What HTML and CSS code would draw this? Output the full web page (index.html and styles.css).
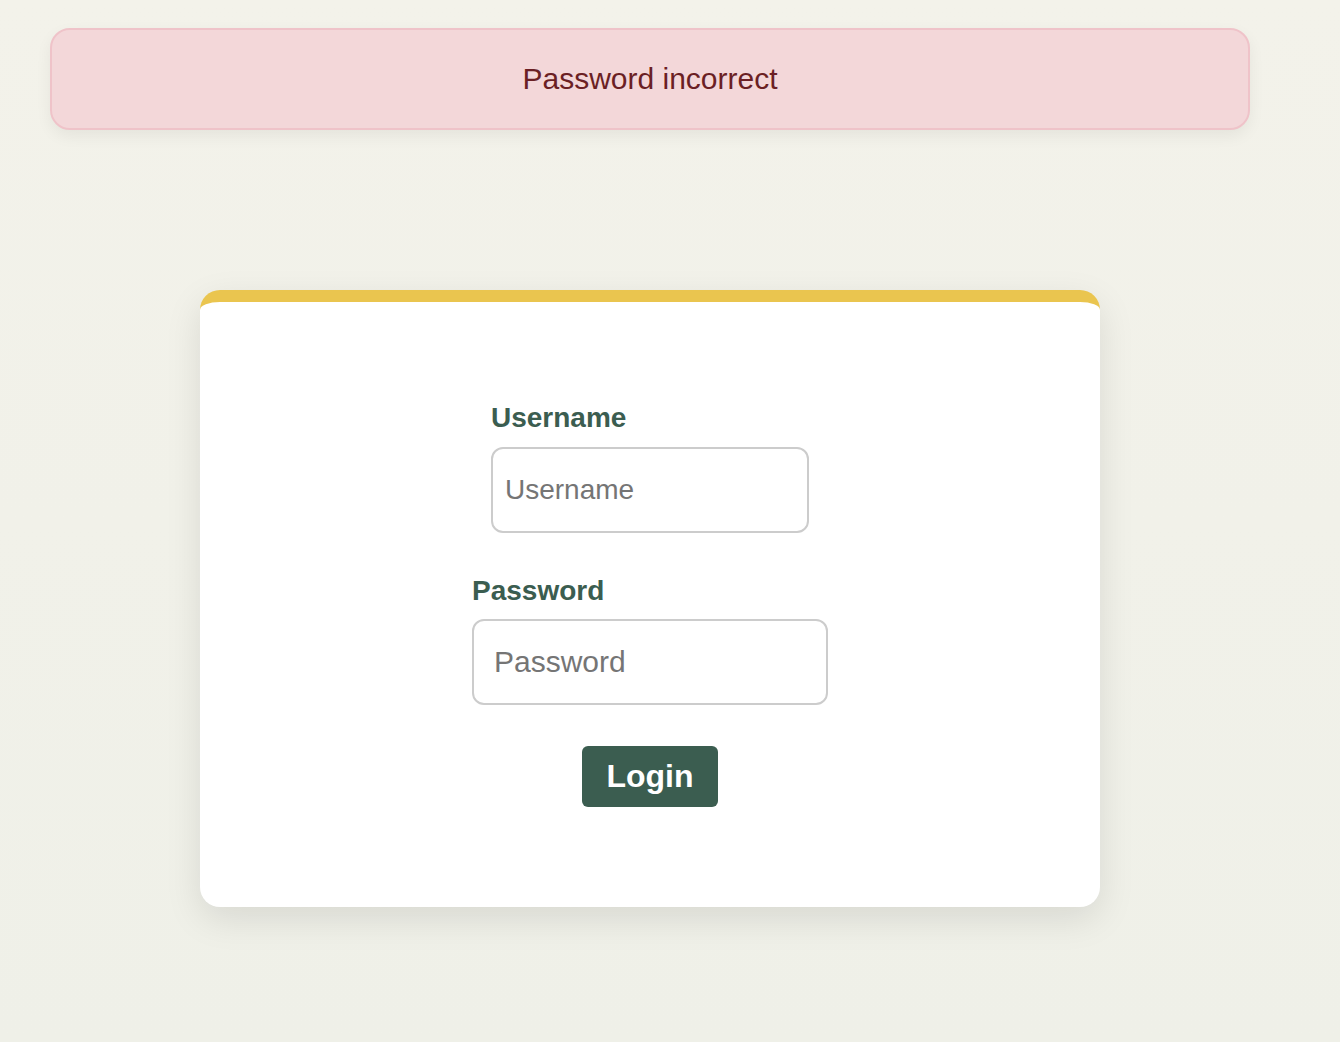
FILE: index.html
```html
<!DOCTYPE html>
<html lang="en">
<head>
<meta charset="utf-8">
<title>Login</title>
<link rel="stylesheet" href="styles.css">
</head>
<body>
<div class="page">
  <div class="alert">Password incorrect</div>
  <form class="card">
    <div class="field field-user">
      <label class="label" for="u">Username</label>
      <input class="input input-user" id="u" type="text" placeholder="Username">
    </div>
    <div class="field field-pass">
      <label class="label" for="p">Password</label>
      <input class="input input-pass" id="p" type="password" placeholder="Password">
    </div>
    <button class="btn" type="button">Login</button>
  </form>
</div>
</body>
</html>
```
FILE: styles.css
```css
html, body {
  margin: 0;
  padding: 0;
}
body {
  min-height: 1042px;
  background: linear-gradient(180deg, #f3f2ea 0%, #eff0e8 100%);
  font-family: "Liberation Sans", Arial, sans-serif;
}
.page {
  width: 1300px;
  display: flex;
  flex-direction: column;
  align-items: center;
  padding-top: 28px;
}
.alert {
  box-sizing: border-box;
  width: 1200px;
  height: 102px;
  display: flex;
  align-items: center;
  justify-content: center;
  background: #f3d7d9;
  border: 2px solid #efc3c9;
  border-radius: 20px;
  color: #6b1f24;
  font-size: 30px;
  box-shadow: 0 6px 16px rgba(0, 0, 0, 0.06);
}
.card {
  box-sizing: border-box;
  margin-top: 160px;
  width: 900px;
  background: #fff;
  border-top: 12px solid #eac54f;
  border-radius: 20px;
  padding: 100px 0;
  display: flex;
  flex-direction: column;
  align-items: center;
  box-shadow: 0 12px 36px rgba(0, 0, 0, 0.10);
}
.field {
  display: flex;
  flex-direction: column;
  align-items: flex-start;
}
.field-pass {
  margin-top: 42px;
}
.label {
  color: #3b5d50;
  font-weight: bold;
  font-size: 28px;
  line-height: 32px;
  margin-bottom: 13px;
}
.field-pass .label {
  margin-bottom: 12px;
}
.input {
  box-sizing: border-box;
  height: 86px;
  border: 2px solid #cccccc;
  border-radius: 12px;
  background: #fff;
  font-family: "Liberation Sans", Arial, sans-serif;
  color: #333;
  outline: none;
}
.input::placeholder {
  color: #757575;
}
.input-user {
  width: 318px;
  padding: 0 12px;
  font-size: 28px;
}
.input-pass {
  width: 356px;
  padding: 0 20px;
  font-size: 30px;
}
.btn {
  margin-top: 41px;
  width: 136px;
  height: 61px;
  border: none;
  border-radius: 6px;
  background: #3b5d50;
  color: #fff;
  font-family: "Liberation Sans", Arial, sans-serif;
  font-weight: bold;
  font-size: 32px;
  padding: 0;
}
```
